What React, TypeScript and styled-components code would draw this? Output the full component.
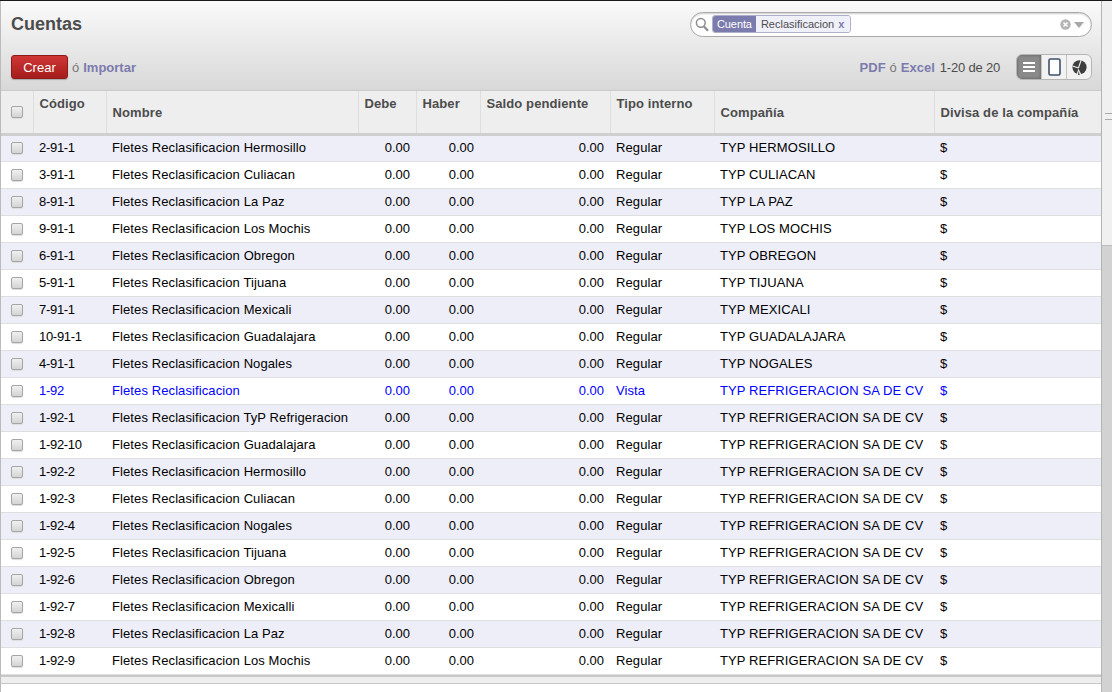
import React from "react";
import styled, { createGlobalStyle } from "styled-components";

const Global = createGlobalStyle`
  html, body { margin: 0; padding: 0; background: #fff; height: 100%; overflow: hidden; }
  body { font-family: "Liberation Sans", Arial, sans-serif; font-size: 13px; color: #000; }
  a { text-decoration: none; }
`;

const Page = styled.div`
  width: 1112px; height: 692px; display: flex; overflow: hidden; border-top: 1px solid #1a1a1a; box-sizing: border-box;
`;
const Main = styled.div`
  width: 1102px; flex: none; box-sizing: border-box; border-left: 1px solid #bbb; border-right: 1px solid #b4b4b4; display: flex; flex-direction: column;
`;
const Scroll = styled.div`
  width: 10px; flex: none; display: flex; flex-direction: column;
`;
const ScrollTrack = styled.div`
  height: 244px; flex: none; background: #f0f0f0; border-bottom: 1px solid #bdbdbd; position: relative;
  &::after { content: ""; position: absolute; left: 3px; right: 0; top: 112px; height: 5px; border-top: 1px solid #aaa; border-bottom: 1px solid #aaa; }
`;
const ScrollThumb = styled.div` flex: 1; background: #d2d2d2; `;
const Header = styled.div`
  height: 90px; flex: none; box-sizing: border-box; border-bottom: 1px solid #cacaca;
  background: linear-gradient(#fafafa, #d8d8d8); display: flex; flex-direction: column; padding: 11px 9px 0 10px;
`;
const TopRow = styled.div`
  display: flex; justify-content: space-between; align-items: flex-start; height: 42px;
`;
const Title = styled.h1`
  margin: 1px 0 0; font-size: 18px; line-height: 23px; font-weight: bold; color: #4c4c4c;
`;
const Search = styled.div`
  width: 402px; height: 25px; box-sizing: border-box; border: 1px solid #a9a9a9; border-radius: 13px; background: #fff;
  display: flex; align-items: center; padding: 0 7px 0 4px; box-shadow: inset 0 1px 2px #ccc;
`;
const Facet = styled.div`
  display: flex; height: 18px; box-sizing: border-box; margin: -1px 0 0 3px; border: 1px solid #afb0c8; border-radius: 3px; overflow: hidden; font-size: 11px; line-height: 16px;
`;
const FacetLabel = styled.span` background: #7c7bad; color: #fff; padding: 0 4px 0 4px; letter-spacing: -0.1px; `;
const FacetValue = styled.span` background: #f0f0fa; color: #4c4c4c; padding: 0 6px 0 5px; b { color: #7c7bad; margin-left: 4px; font-weight: bold; } `;
const SearchEnd = styled.div` margin-left: auto; display: flex; align-items: center; gap: 3px; `;
const BottomRow = styled.div` display: flex; align-items: center; height: 26px; `;
const CreateButton = styled.button`
  width: 57px; height: 24px; padding: 0; border: 1px solid #8b1a1a; border-radius: 3px; font: 13px "Liberation Sans", Arial, sans-serif; color: #fff;
  background: linear-gradient(#d03636, #a51d1d); box-shadow: 0 1px 1px rgba(0,0,0,.25);
`;
const Muted = styled.span` color: #777; margin: 0 4px; `;
const Link = styled.a` color: #7c7bad; font-weight: bold; `;
const Spacer = styled.div` flex: 1; `;
const Pager = styled.span` color: #4c4c4c; margin-left: 5px; margin-right: 16px; letter-spacing: -0.2px; `;
const Switch = styled.div`
  display: flex; width: 76px; height: 26px; box-sizing: border-box; border: 1px solid #b5b5b5; border-radius: 6px; overflow: hidden; background: #f2f2f2;
`;
const SwitchButton = styled.div<{ $on?: boolean }>`
  flex: 1; display: flex; align-items: center; justify-content: center; border-left: ${p => (p.$on ? "none" : "1px solid #c4c4c4")};
  background: ${p => (p.$on ? "#8a8a8a" : "transparent")};
  box-shadow: ${p => (p.$on ? "inset 0 0 3px #555" : "none")};
`;
const Table = styled.table`
  width: 100%; table-layout: fixed; border-collapse: collapse; flex: none; font-size: 13px; letter-spacing: 0.1px;
`;
const HeadRow = styled.tr` height: 43px; background: #eeeeee; border-bottom: 3px solid #cfcfcf; `;
const Th = styled.th<{ $top?: boolean }>`
  box-sizing: border-box; padding: ${p => (p.$top ? "5px 6px 0 6px" : "3px 6px 0 6px")}; vertical-align: ${p => (p.$top ? "top" : "middle")}; text-align: left;
  font-size: 13px; line-height: 16px; font-weight: bold; color: #4c4c4c; border-right: 1px solid #dedede; white-space: nowrap; letter-spacing: 0.1px;
  &:last-child { border-right: none; }
`;
const Row = styled.tr<{ $odd: boolean; $view?: boolean }>`
  height: 27px; background: ${p => (p.$odd ? "#eeeef8" : "#fff")}; border-bottom: 1px solid #dfdfdf; color: ${p => (p.$view ? "#0000ff" : "#000")};
`;
const Td = styled.td`
  box-sizing: border-box; padding: 0 0 0 6px; text-align: left; white-space: nowrap; overflow: hidden; line-height: 16px;
`;
const CodeCell = styled(Td)` letter-spacing: -0.3px; `;
const AmountCell = styled(Td)` padding: 0 6px 0 0; text-align: right; letter-spacing: 0; `;
const CheckCell = styled.td` padding: 0 0 0 10px; `;
const HeadCheckCell = styled.th` box-sizing: border-box; padding: 0 0 0 10px; border-right: 1px solid #dedede; text-align: left; `;
const Check = styled.span`
  display: block; width: 10px; height: 10px; border: 1px solid #a5a5a5; border-radius: 2px; background: linear-gradient(#f0f0f0, #d4d4d4); box-shadow: 0 1px 1px #ddd;
`;
const Footer = styled.div` height: 6px; flex: none; background: #eeeeee; border-top: 2px solid #c8c8c8; border-bottom: 1px solid #c8c8c8; `;

type R = [string, string, string, string];
const H = (s: string) => "TYP " + s;
const RS = "TYP REFRIGERACION SA DE CV";
const rows: R[] = [
  ["2-91-1", "Fletes Reclasificacion Hermosillo", "Regular", H("HERMOSILLO")],
  ["3-91-1", "Fletes Reclasificacion Culiacan", "Regular", H("CULIACAN")],
  ["8-91-1", "Fletes Reclasificacion La Paz", "Regular", H("LA PAZ")],
  ["9-91-1", "Fletes Reclasificacion Los Mochis", "Regular", H("LOS MOCHIS")],
  ["6-91-1", "Fletes Reclasificacion Obregon", "Regular", H("OBREGON")],
  ["5-91-1", "Fletes Reclasificacion Tijuana", "Regular", H("TIJUANA")],
  ["7-91-1", "Fletes Reclasificacion Mexicali", "Regular", H("MEXICALI")],
  ["10-91-1", "Fletes Reclasificacion Guadalajara", "Regular", H("GUADALAJARA")],
  ["4-91-1", "Fletes Reclasificacion Nogales", "Regular", H("NOGALES")],
  ["1-92", "Fletes Reclasificacion", "Vista", RS],
  ["1-92-1", "Fletes Reclasificacion TyP Refrigeracion", "Regular", RS],
  ["1-92-10", "Fletes Reclasificacion Guadalajara", "Regular", RS],
  ["1-92-2", "Fletes Reclasificacion Hermosillo", "Regular", RS],
  ["1-92-3", "Fletes Reclasificacion Culiacan", "Regular", RS],
  ["1-92-4", "Fletes Reclasificacion Nogales", "Regular", RS],
  ["1-92-5", "Fletes Reclasificacion Tijuana", "Regular", RS],
  ["1-92-6", "Fletes Reclasificacion Obregon", "Regular", RS],
  ["1-92-7", "Fletes Reclasificacion Mexicalli", "Regular", RS],
  ["1-92-8", "Fletes Reclasificacion La Paz", "Regular", RS],
  ["1-92-9", "Fletes Reclasificacion Los Mochis", "Regular", RS],
];
const widths = [32, 73, 252, 58, 64, 130, 104, 220, 167];

export default function App() {
  return (
    <Page>
      <Global />
      <Main>
        <Header>
          <TopRow>
            <Title>Cuentas</Title>
            <Search>
              <svg width="14" height="15" viewBox="0 0 14 15" fill="none" stroke="#8e8e8e" strokeWidth="1.5">
                <circle cx="5.8" cy="5.8" r="4.4" />
                <path d="M9 9.4l4 4.4" strokeWidth="2.2" />
              </svg>
              <Facet>
                <FacetLabel>Cuenta</FacetLabel>
                <FacetValue>Reclasificacion<b>x</b></FacetValue>
              </Facet>
              <SearchEnd>
                <svg width="11" height="11" viewBox="0 0 11 11">
                  <circle cx="5.5" cy="5.5" r="5.2" fill="#b4b4b4" />
                  <path d="M3.5 3.5l4 4M7.5 3.5l-4 4" stroke="#fff" strokeWidth="1.5" />
                </svg>
                <svg width="10" height="6" viewBox="0 0 10 6"><path d="M0 0h10L5 6z" fill="#a8a8a8" /></svg>
              </SearchEnd>
            </Search>
          </TopRow>
          <BottomRow>
            <CreateButton>Crear</CreateButton>
            <Muted>ó</Muted>
            <Link>Importar</Link>
            <Spacer />
            <Link>PDF</Link>
            <Muted>ó</Muted>
            <Link>Excel</Link>
            <Pager>1-20 de 20</Pager>
            <Switch>
              <SwitchButton $on>
                <svg width="14" height="12" viewBox="0 0 14 12"><path d="M1 2h12M1 6h12M1 10h12" stroke="#fff" strokeWidth="2" /></svg>
              </SwitchButton>
              <SwitchButton>
                <svg width="13" height="18" viewBox="0 0 13 18"><rect x="1" y="1" width="11" height="16" rx="1.5" fill="#fff" stroke="#3d5068" strokeWidth="1.6" /></svg>
              </SwitchButton>
              <SwitchButton>
                <svg width="15" height="15" viewBox="0 0 14 14">
                  <circle cx="7" cy="6.8" r="6.6" fill="#3e3e3e" />
                  <path d="M6 7.5L.5 5.5M6 7.5L8.5 .2" stroke="#f2f2f2" strokeWidth="1" fill="none" />
                  <path d="M6 8.2L4 14h5z" fill="#f2f2f2" />
                  <path d="M6.2 10L5.6 14h1.6z" fill="#3e3e3e" />
                </svg>
              </SwitchButton>
            </Switch>
          </BottomRow>
        </Header>
        <Table>
          <colgroup>
            {widths.map((w, i) => <col key={i} style={{ width: w }} />)}
          </colgroup>
          <thead>
            <HeadRow>
              <HeadCheckCell><Check /></HeadCheckCell>
              <Th $top>Código</Th>
              <Th>Nombre</Th>
              <Th $top>Debe</Th>
              <Th $top>Haber</Th>
              <Th $top>Saldo pendiente</Th>
              <Th $top>Tipo interno</Th>
              <Th>Compañía</Th>
              <Th>Divisa de la compañía</Th>
            </HeadRow>
          </thead>
          <tbody>
            {rows.map((r, i) => (
              <Row key={i} $odd={i % 2 === 0} $view={r[2] === "Vista"}>
                <CheckCell><Check /></CheckCell>
                <CodeCell>{r[0]}</CodeCell>
                <Td>{r[1]}</Td>
                <AmountCell>0.00</AmountCell>
                <AmountCell>0.00</AmountCell>
                <AmountCell>0.00</AmountCell>
                <Td>{r[2]}</Td>
                <Td>{r[3]}</Td>
                <Td>$</Td>
              </Row>
            ))}
          </tbody>
        </Table>
        <Footer />
      </Main>
      <Scroll>
        <ScrollTrack />
        <ScrollThumb />
      </Scroll>
    </Page>
  );
}
